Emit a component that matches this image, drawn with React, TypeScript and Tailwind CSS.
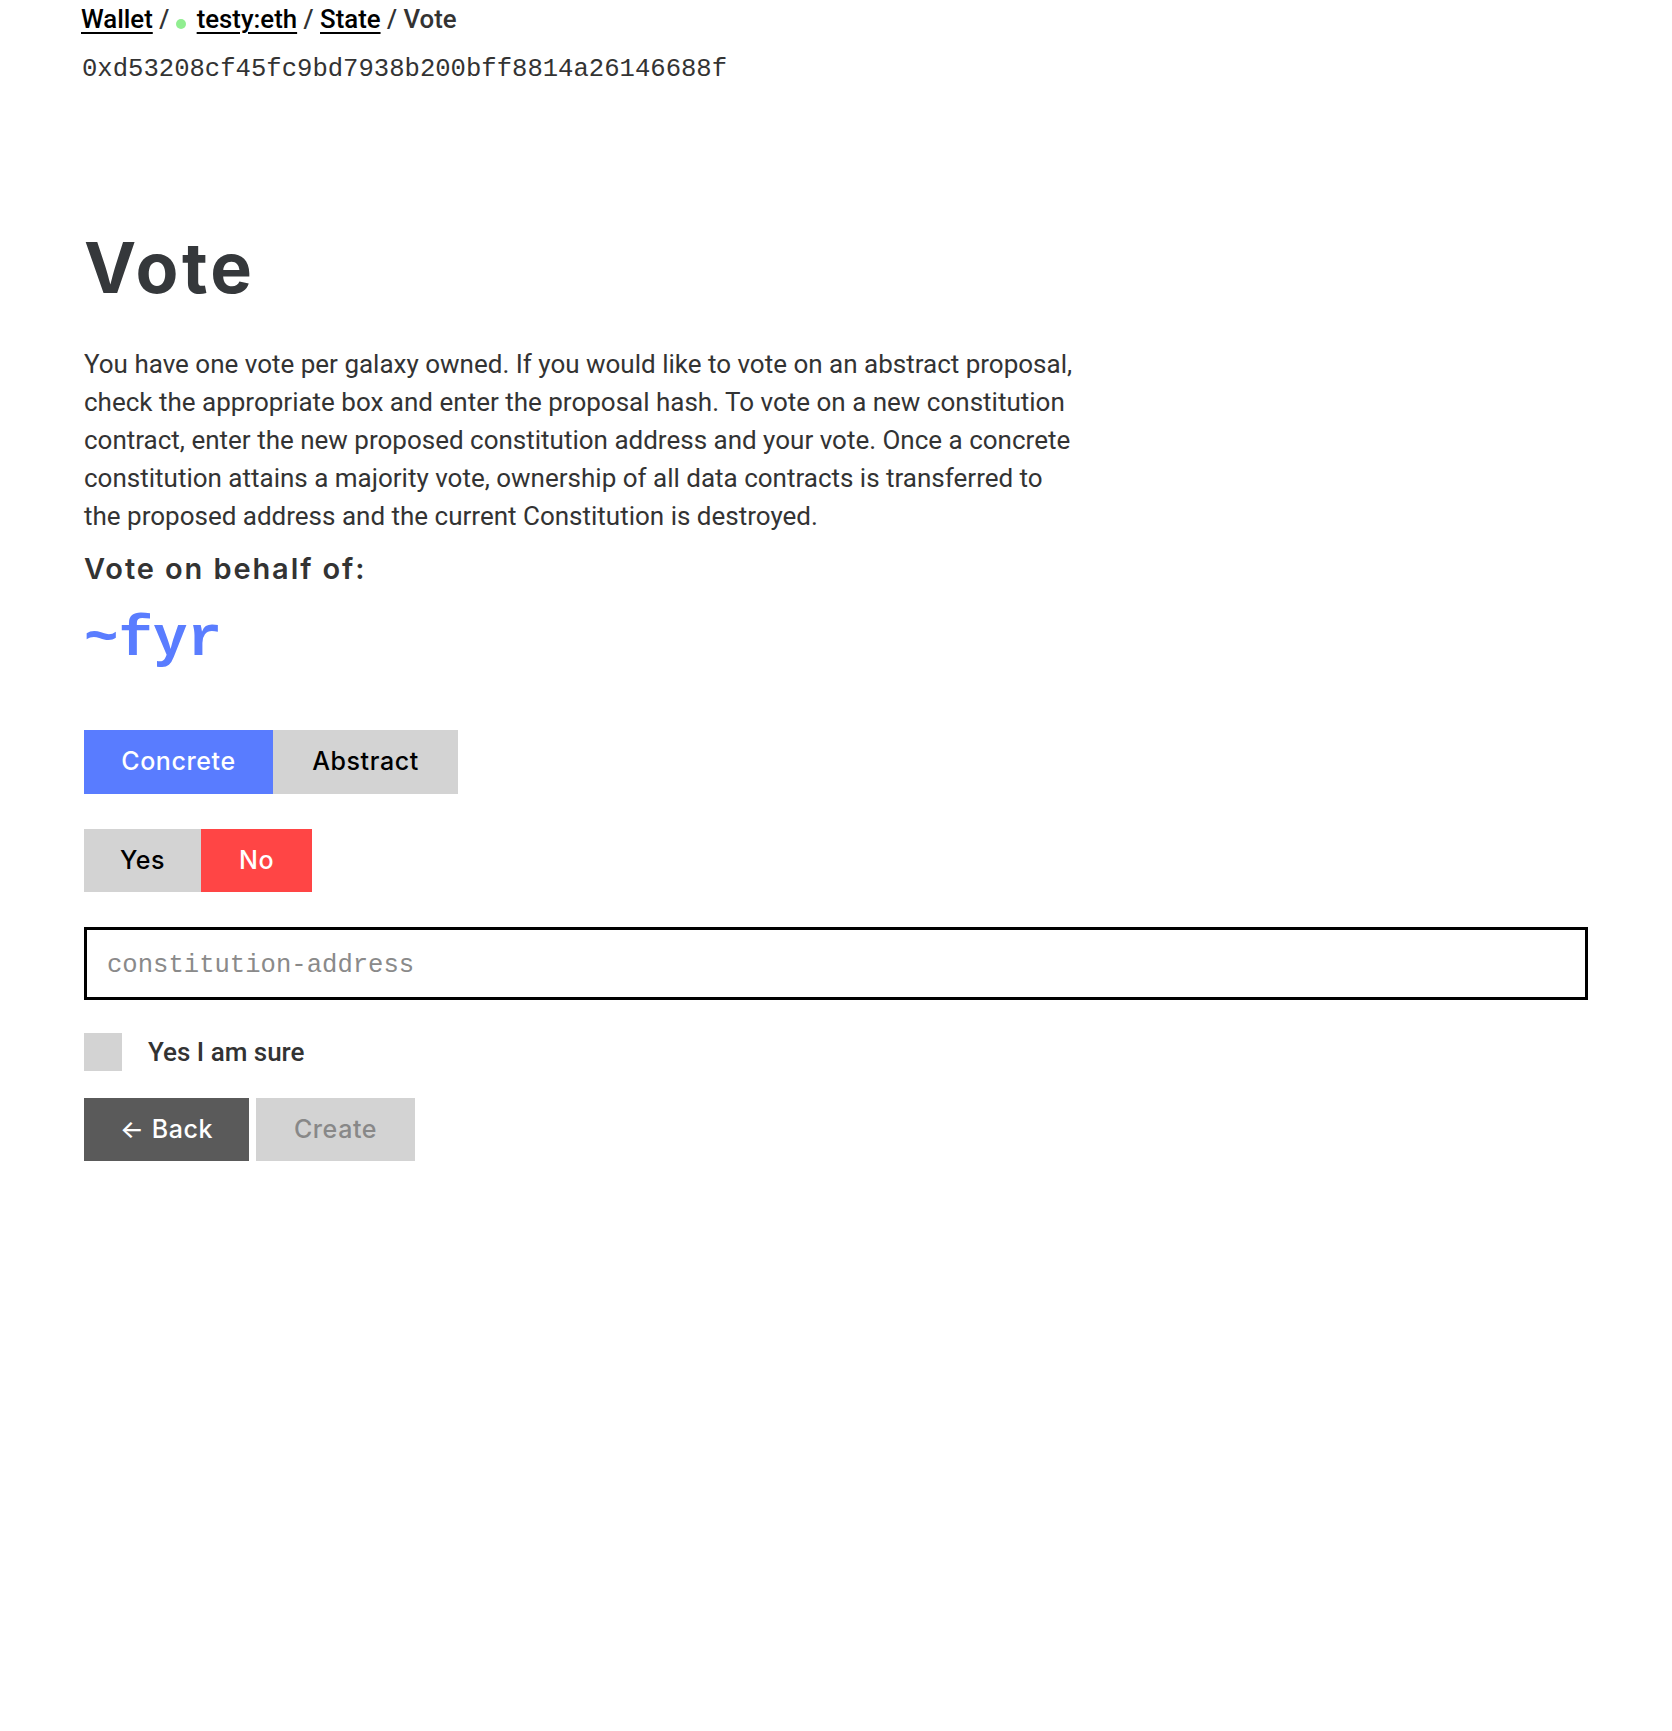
import { useState } from 'react'

const roboto = "font-['Roboto','Liberation_Sans',sans-serif]"
const work = "font-['Inter','Liberation_Sans',sans-serif]"
const mono = "font-['Liberation_Mono','Courier_New',monospace]"

export default function App() {
  const [kind, setKind] = useState<'concrete' | 'abstract'>('concrete')
  const [vote, setVote] = useState<'yes' | 'no'>('no')
  const [sure, setSure] = useState(false)

  return (
    <div className="min-h-screen bg-white text-[#333]">
      {/* Breadcrumb */}
      <div className={`${roboto} px-[81px] text-[25.8px] leading-[38px] font-medium text-[#333]`}>
        <a href="#" className="text-black underline underline-offset-4 decoration-2">Wallet</a>
        <span> / </span>
        <span className="inline-block w-[10px] h-[10px] rounded-full bg-[#90ee90] mr-[11px] align-[-1px]" />
        <a href="#" className="text-black underline underline-offset-4 decoration-2">testy:eth</a>
        <span> / </span>
        <a href="#" className="text-black underline underline-offset-4 decoration-2">State</a>
        <span> / Vote</span>
      </div>
      <div className={`${mono} px-[82px] mt-[16px] text-[25.6px] leading-[32px] text-[#333]`}>
        0xd53208cf45fc9bd7938b200bff8814a26146688f
      </div>

      <div className="px-[84px]">
        <h1 className={`${work} mt-[147px] text-[70px] leading-[70px] font-bold tracking-[3.5px] text-[#35383b]`}>Vote</h1>

        <p className={`${roboto} mt-[42px] max-w-[994px] text-[26px] leading-[38px] text-[#333]`}>
          You have one vote per galaxy owned. If you would like to vote on an abstract proposal,
          check the appropriate box and enter the proposal hash. To vote on a new constitution
          contract, enter the new proposed constitution address and your vote. Once a concrete
          constitution attains a majority vote, ownership of all data contracts is transferred to
          the proposed address and the current Constitution is destroyed.
        </p>

        <h3 className={`${work} mt-[16px] text-[29px] leading-[36px] font-semibold tracking-[1.9px] text-[#333]`}>
          Vote on behalf of:
        </h3>
        <div className={`${mono} mt-[21px] text-[57.5px] leading-[64px] font-bold text-[#5a7dff]`}>~fyr</div>

        {/* Concrete / Abstract */}
        <div className={`${work} mt-[58px] flex text-[25px] font-medium tracking-[0.6px]`}>
          <button
            onClick={() => setKind('concrete')}
            className={`h-[64px] w-[189px] ${kind === 'concrete' ? 'bg-[#597cff] text-white' : 'bg-[#d3d3d3] text-black'}`}
          >
            Concrete
          </button>
          <button
            onClick={() => setKind('abstract')}
            className={`h-[64px] w-[185px] ${kind === 'abstract' ? 'bg-[#597cff] text-white' : 'bg-[#d3d3d3] text-black'}`}
          >
            Abstract
          </button>
        </div>

        {/* Yes / No */}
        <div className={`${work} mt-[35px] flex text-[25px] font-medium tracking-[0.6px]`}>
          <button
            onClick={() => setVote('yes')}
            className={`h-[63px] w-[117px] ${vote === 'yes' ? 'bg-[#4caf50] text-white' : 'bg-[#d3d3d3] text-black'}`}
          >
            Yes
          </button>
          <button
            onClick={() => setVote('no')}
            className={`h-[63px] w-[111px] ${vote === 'no' ? 'bg-[#ff4545] text-white' : 'bg-[#d3d3d3] text-black'}`}
          >
            No
          </button>
        </div>

        <input
          placeholder="constitution-address"
          className={`${mono} mt-[35px] block w-full h-[73px] border-[3px] border-black px-[20px] pt-[4px] text-[25.6px] text-[#333] placeholder:text-[#8a8a8a] outline-none`}
        />

        {/* Confirm */}
        <label className="mt-[33px] flex items-center gap-[26px] cursor-pointer">
          <span
            onClick={() => setSure(!sure)}
            className={`w-[38px] h-[38px] ${sure ? 'bg-[#333]' : 'bg-[#d3d3d3]'}`}
          />
          <span className={`${roboto} text-[26px] leading-[38px] font-medium text-[#333]`}>Yes I am sure</span>
        </label>

        <div className={`${work} mt-[27px] flex gap-[7px] text-[25px] font-medium tracking-[0.6px]`}>
          <button className="h-[63px] w-[165px] bg-[#5a5a5a] text-white">← Back</button>
          <button disabled={!sure} className="h-[63px] w-[159px] bg-[#d3d3d3] text-[#888]">Create</button>
        </div>
      </div>
    </div>
  )
}
